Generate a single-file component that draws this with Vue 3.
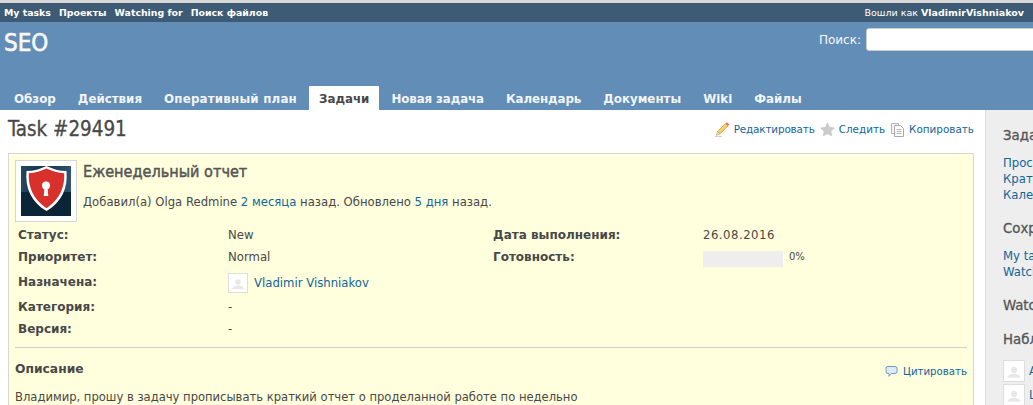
<template>
  <div class="page">
    <div class="top-menu">
      <ul class="top-links">
        <li v-for="link in topLinks" :key="link">{{ link }}</li>
      </ul>
      <div class="logged">Вошли как <strong>VladimirVishniakov</strong></div>
    </div>
    <div class="header">
      <div class="header-row">
        <h1>SEO</h1>
        <div class="search">
          <label>Поиск:</label>
          <input type="text" />
        </div>
      </div>
      <ul class="tabs">
        <li v-for="tab in tabs" :key="tab" :class="{ selected: tab === 'Задачи' }">{{ tab }}</li>
      </ul>
    </div>
    <div class="main">
      <div class="content">
        <div class="title-row">
          <h2>Task #29491</h2>
          <div class="actions">
            <a class="edit">
              <svg width="15" height="15" viewBox="0 0 15 15">
                <path d="M2.500 9.500 10.500 1.500l2.500 2.500L5 12z" fill="#f5cf6b" stroke="#d9a441" stroke-width=".8" />
                <path d="M10.500 1.500 12 .3l2.300 2.300L13 4z" fill="#e2707a" />
                <path d="M2.500 9.500 1.200 13.300 5 12z" fill="#f0dcb4" stroke="#b89a66" stroke-width=".5" />
                <path d="M0 14.500h7" stroke="#d0d0d0" />
              </svg>
              Редактировать
            </a>
            <a>
              <svg width="15" height="15" viewBox="0 0 15 15">
                <path d="M7.500.8l2.100 4.400 4.800.7-3.500 3.300.9 4.800-4.300-2.300-4.300 2.300.9-4.800L.6 5.900l4.800-.7z" fill="#cbcbcb" stroke="#bdbdbd" stroke-width=".5" />
              </svg>
              Следить
            </a>
            <a>
              <svg width="15" height="15" viewBox="0 0 15 15">
                <path d="M1.500 1.500h7v10h-7z" fill="#f4f4f4" stroke="#b5b5b5" />
                <path d="M4.500 3.500h6l3 3v8h-9z" fill="#fff" stroke="#a8a8a8" />
                <path d="M6.500 7.500h5M6.500 9.500h5M6.500 11.500h5" stroke="#b5b5b5" />
              </svg>
              Копировать
            </a>
          </div>
        </div>
        <div class="issue">
          <div class="issue-head">
            <div class="gravatar-large">
              <svg width="50" height="50" viewBox="0 0 50 50">
                <defs>
                  <linearGradient id="sky" x1="0" y1="0" x2="1" y2="0">
                    <stop offset="0" stop-color="#24465f" />
                    <stop offset="0.5" stop-color="#16324a" />
                    <stop offset="1" stop-color="#2f5570" />
                  </linearGradient>
                </defs>
                <rect width="50" height="50" fill="#0c2438" />
                <rect width="50" height="26" fill="url(#sky)" />
                <path d="M25.500 0C32 3 38 5 45.500 5 47 22 41 36 25.500 45 10 36 4 22 5.500 5 13 5 19 3 25.500 0z" fill="#fff" />
                <path d="M25.500 2.600C31 5.100 37 7 43.200 7.200 44 21 38.500 33.500 25.500 42.200 12.500 33.500 7 21 7.800 7.200 14 7 20 5.100 25.500 2.600z" fill="#d8302a" />
                <circle cx="25" cy="19.500" r="4" fill="#fff" />
                <path d="M23.500 21.500h3l.8 8.500h-4.600z" fill="#fff" />
              </svg>
            </div>
            <div class="subject">
              <h3>Еженедельный отчет</h3>
              <p>Добавил(а) Olga Redmine <a>2 месяца</a> назад. Обновлено <a>5 дня</a> назад.</p>
            </div>
          </div>
          <div class="attributes">
            <div class="attr-col">
              <div class="attr"><span class="label">Статус:</span><span class="value">New</span></div>
              <div class="attr"><span class="label">Приоритет:</span><span class="value">Normal</span></div>
              <div class="attr assigned">
                <span class="label">Назначена:</span>
                <span class="value">
                  <span class="avatar">
                    <svg width="18" height="18" viewBox="0 0 18 18">
                      <circle cx="9" cy="8" r="2.800" fill="#e8e8e8" />
                      <path d="M3 15c.5-2.500 3-3.500 6-3.500s5.500 1 6 3.500z" fill="#e8e8e8" />
                    </svg>
                  </span>
                  <a>Vladimir Vishniakov</a>
                </span>
              </div>
              <div class="attr"><span class="label">Категория:</span><span class="value">-</span></div>
              <div class="attr"><span class="label">Версия:</span><span class="value">-</span></div>
            </div>
            <div class="attr-col second">
              <div class="attr"><span class="label">Дата выполнения:</span><span class="value date">26.08.2016</span></div>
              <div class="attr">
                <span class="label">Готовность:</span>
                <span class="value progress-cell">
                  <span class="progress"></span>
                  <span class="pct">0%</span>
                </span>
              </div>
            </div>
          </div>
          <div class="description">
            <div class="desc-head">
              <strong>Описание</strong>
              <a>
                <svg width="13" height="13" viewBox="0 0 13 13">
                  <path d="M3 1.500h7a2 2 0 0 1 2 2v3a2 2 0 0 1-2 2H6.500L4 11.300V8.500H3a2 2 0 0 1-2-2v-3a2 2 0 0 1 2-2z" fill="#dcebf6" stroke="#6d9cc4" />
                </svg>
                Цитировать
              </a>
            </div>
            <p>Владимир, прошу в задачу прописывать краткий отчет о проделанной работе по недельно</p>
          </div>
        </div>
      </div>
      <div class="sidebar">
        <h4>Задачи</h4>
        <a>Просмотреть все</a>
        <a>Краткий отчет</a>
        <a>Календарь</a>
        <h4 class="gap-top">Сохраненные</h4>
        <a>My tasks</a>
        <a>Watching for</a>
        <h4 class="gap-top">Watchers</h4>
        <h4 class="watchers-title">Наблюдатели</h4>
        <div class="watcher" v-for="w in watchers" :key="w">
          <span class="avatar big">
            <svg width="20" height="20" viewBox="0 0 18 18">
              <circle cx="9" cy="8" r="2.800" fill="#e8e8e8" />
              <path d="M3 15c.5-2.500 3-3.500 6-3.500s5.500 1 6 3.500z" fill="#e8e8e8" />
            </svg>
          </span>
          <a>{{ w }}</a>
        </div>
      </div>
    </div>
  </div>
</template>

<script setup>
const topLinks = ['My tasks', 'Проекты', 'Watching for', 'Поиск файлов']
const tabs = ['Обзор', 'Действия', 'Оперативный план', 'Задачи', 'Новая задача', 'Календарь', 'Документы', 'Wiki', 'Файлы']
const watchers = ['Alexey', 'Liliya']
</script>

<style>
html, body {
  margin: 0;
  height: 405px;
  overflow: hidden;
  background: #fff;
}
</style>

<style scoped>
.page {
  width: 1033px;
  height: 405px;
  overflow: hidden;
  font-family: "DejaVu Sans", Verdana, sans-serif;
  font-size: 12px;
  color: #484848;
  background: #fff;
  border-top: 3px solid #d8d8d8;
  box-sizing: border-box;
}
a {
  color: #169;
}
.top-menu {
  height: 19px;
  background: #3e5b76;
  color: #fff;
  display: flex;
  justify-content: space-between;
  align-items: center;
  padding: 0 9px 0 4px;
  font-size: 9.500px;
}
.top-links {
  display: flex;
  gap: 8px;
  list-style: none;
  margin: 0;
  padding: 0;
  font-weight: bold;
  font-size: 9.400px;
}
.header {
  height: 88px;
  background: #628db6;
  color: #f8f8f8;
  display: flex;
  flex-direction: column;
  justify-content: space-between;
}
.header-row {
  display: flex;
  justify-content: space-between;
  padding: 6px 0 0 4px;
}
h1 {
  margin: 0;
  font-size: 24px;
  font-weight: normal;
  font-stretch: condensed;
  line-height: 30px;
  -webkit-text-stroke: 0.6px #f8f8f8;
}
.search {
  display: flex;
  align-items: center;
  gap: 5px;
  height: 23px;
  margin-right: -10px;
  font-size: 12px;
}
.search input {
  width: 177px;
  height: 23px;
  padding: 0;
  box-sizing: border-box;
  border: 1px solid #ccc;
  border-radius: 3px;
  background: #fff;
}
.tabs {
  display: flex;
  list-style: none;
  margin: 0;
  padding: 0 0 0 4px;
  font-weight: bold;
  font-size: 11.850px;
}
.tabs li {
  height: 24px;
  line-height: 26px;
  padding: 0 10px;
  margin-right: 2px;
  color: #f2f5f8;
}
.tabs li:nth-child(3) {
  letter-spacing: .2px;
}
.tabs li:nth-child(5),
.tabs li:nth-child(6) {
  letter-spacing: -.1px;
}
.tabs li.selected {
  background: #fff;
  color: #484848;
}
.main {
  display: flex;
  height: 295px;
}
.content {
  width: 985px;
  flex: none;
  box-sizing: border-box;
  padding: 0 11px 0 8px;
}
.title-row {
  display: flex;
  justify-content: space-between;
  align-items: center;
  height: 43px;
  padding-bottom: 5px;
  box-sizing: border-box;
}
h2 {
  margin: 0;
  font-size: 20.400px;
  font-weight: normal;
  font-stretch: condensed;
  -webkit-text-stroke: 0.3px #484848;
}
.actions {
  display: flex;
  gap: 5px;
  font-size: 10.400px;
}
.actions a {
  display: flex;
  align-items: center;
  gap: 4px;
}
.actions a.edit {
  letter-spacing: -.15px;
}
.issue {
  background: #ffd;
  border: 1px solid #d7d7d7;
  padding: 6px 6px 0;
  height: 300px;
  box-sizing: border-box;
}
.issue-head {
  display: flex;
  gap: 6px;
}
.gravatar-large {
  width: 50px;
  height: 50px;
  padding: 5px;
  background: #fff;
  border: 1px solid #d5d5d5;
  line-height: 0;
}
.subject h3 {
  margin: 2px 0 0;
  font-size: 16.100px;
  font-weight: normal;
  font-stretch: condensed;
  -webkit-text-stroke: 0.45px #555;
  line-height: 20px;
  color: #555;
}
.subject p {
  margin: 13px 0 0;
  font-size: 11.650px;
}
.attributes {
  display: flex;
  margin-top: 2px;
}
.attr-col {
  width: 475px;
  padding-left: 3px;
  box-sizing: border-box;
}
.attr {
  display: flex;
  height: 22px;
  align-items: center;
}
.attr.assigned {
  height: 28px;
}
.label {
  width: 210px;
  font-weight: bold;
  flex: none;
}
.value {
  font-size: 11.700px;
  display: flex;
  align-items: center;
  gap: 6px;
}
.assigned .value {
  padding-top: 2px;
}
.date {
  letter-spacing: .5px;
}
.avatar {
  display: inline-block;
  flex: none;
  width: 18px;
  height: 18px;
  background: #fff;
  border: 1px solid #ddd;
  line-height: 0;
}
.avatar.big {
  width: 20px;
  height: 20px;
}
.progress {
  display: inline-block;
  width: 80px;
  height: 16px;
  margin-top: 4px;
  background: #eee;
}
.pct {
  font-size: 10px;
  margin-top: -2px;
}
.description {
  border-top: 1px solid #d0d0d0;
  margin-top: 7px;
  padding-top: 12px;
}
.desc-head {
  display: flex;
  justify-content: space-between;
  align-items: center;
  font-size: 12.300px;
}
.desc-head a {
  font-size: 10.200px;
  display: flex;
  align-items: center;
  gap: 5px;
  margin-top: 5px;
}
.description p {
  margin: 12px 0 0;
  font-size: 11.570px;
}
.sidebar {
  flex: 1;
  min-width: 0;
  background: #eee;
  border-left: 1px solid #ddd;
  padding: 17px 0 0 17px;
  font-size: 11.700px;
  line-height: 16px;
  white-space: nowrap;
  overflow: hidden;
  display: flex;
  flex-direction: column;
}
.sidebar h4 {
  margin: 0 0 12px;
  font-size: 14.800px;
  font-weight: normal;
  font-stretch: condensed;
  -webkit-text-stroke: 0.3px #555;
  color: #555;
}
.sidebar .gap-top {
  margin-top: 17px;
}
.sidebar .watchers-title {
  margin-top: 6px;
  margin-bottom: 12px;
}
.watcher {
  display: flex;
  align-items: center;
  gap: 4px;
  height: 24px;
  flex: none;
}
</style>
